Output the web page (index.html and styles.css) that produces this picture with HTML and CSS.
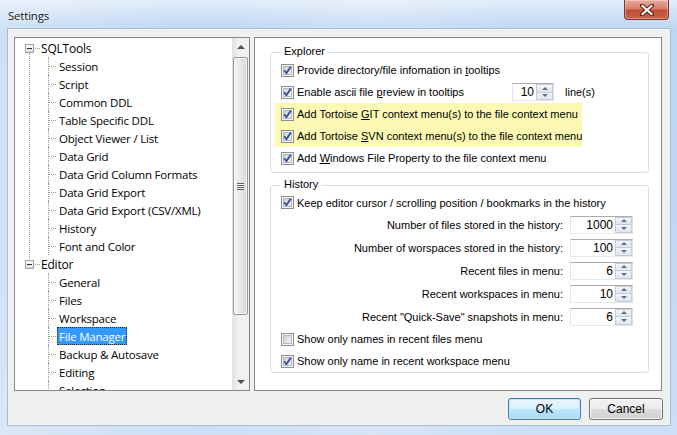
FILE: index.html
```html
<!DOCTYPE html>
<html>
<head>
<meta charset="utf-8">
<link rel="stylesheet" href="styles.css">
</head>
<body>
<svg class="defs" width="0" height="0">
  <defs>
    <linearGradient id="cbg" x1="0" y1="0" x2="1" y2="1">
      <stop offset="0" stop-color="#cbcfd5"/>
      <stop offset="1" stop-color="#f6f6f6"/>
    </linearGradient>
    <symbol id="cb-off" viewBox="0 0 13 13">
      <rect x="0.5" y="0.5" width="12" height="12" fill="#f4f4f4" stroke="#8f8f8f"/>
      <rect x="2.5" y="2.5" width="8" height="8" fill="url(#cbg)" stroke="#b4b9be"/>
    </symbol>
    <symbol id="cb-on" viewBox="0 0 13 13">
      <rect x="0.5" y="0.5" width="12" height="12" fill="#f4f4f4" stroke="#8f8f8f"/>
      <rect x="2.5" y="2.5" width="8" height="8" fill="url(#cbg)" stroke="#b4b9be"/>
      <path d="M3.2 6.3 L5.4 9.2 L9.8 2.6" fill="none" stroke="#3b5596" stroke-width="1.9" stroke-linejoin="round"/>
    </symbol>
  </defs>
</svg>
<div class="window">
  <div class="titlebar">
    <span class="title">Settings</span>
    <div class="close">
      <svg width="14" height="12" viewBox="0 0 14 12">
        <path d="M2 1.5 L12 10.5 M12 1.5 L2 10.5" stroke="#5b1d12" stroke-width="4" stroke-linecap="square"/>
        <path d="M2.5 2 L11.5 10 M11.5 2 L2.5 10" stroke="#ffffff" stroke-width="2.2" stroke-linecap="square"/>
      </svg>
    </div>
  </div>
  <div class="client">
    <div class="panes">
      <div class="tree">
        <div class="tree-content">
          <ul class="roots">
            <li class="rnode">
              <div class="rrow"><span class="exp"></span><span class="hdot"></span><span class="rlbl">SQLTools</span></div>
              <ul class="kids">
                <li><span class="lbl">Session</span></li>
                <li><span class="lbl">Script</span></li>
                <li><span class="lbl">Common DDL</span></li>
                <li><span class="lbl">Table Specific DDL</span></li>
                <li><span class="lbl">Object Viewer / List</span></li>
                <li><span class="lbl">Data Grid</span></li>
                <li><span class="lbl">Data Grid Column Formats</span></li>
                <li><span class="lbl">Data Grid Export</span></li>
                <li><span class="lbl">Data Grid Export (CSV/XML)</span></li>
                <li><span class="lbl">History</span></li>
                <li><span class="lbl">Font and Color</span></li>
              </ul>
            </li>
            <li class="rnode">
              <div class="rrow"><span class="exp"></span><span class="hdot"></span><span class="rlbl">Editor</span></div>
              <ul class="kids">
                <li><span class="lbl">General</span></li>
                <li><span class="lbl">Files</span></li>
                <li><span class="lbl">Workspace</span></li>
                <li><span class="lbl selected">File Manager</span></li>
                <li><span class="lbl">Backup &amp; Autosave</span></li>
                <li><span class="lbl">Editing</span></li>
                <li><span class="lbl">Selection</span></li>
              </ul>
            </li>
          </ul>
        </div>
        <div class="vscroll">
          <div class="sbtn"><span class="tri-up"></span></div>
          <div class="track">
            <div class="thumb"><span class="grip"></span></div>
          </div>
          <div class="sbtn"><span class="tri-down"></span></div>
        </div>
      </div>
      <div class="page">
        <fieldset class="group explorer">
          <legend>Explorer</legend>
          <div class="cbrow"><svg class="cb"><use href="#cb-on"/></svg><span>Provide directory/file infomation in <u>t</u>ooltips</span></div>
          <div class="cbrow"><svg class="cb"><use href="#cb-on"/></svg><span class="fixlbl">Enable ascii file <u>p</u>review in tooltips</span>
            <div class="spin small"><span class="val">10</span><span class="arrows"><span class="ab"><i class="up"></i></span><span class="ab"><i class="dn"></i></span></span></div>
            <span class="unit">line(s)</span>
          </div>
          <div class="hl">
            <div class="cbrow"><svg class="cb"><use href="#cb-on"/></svg><span>Add Tortoise <u>G</u>IT context menu(s) to the file context menu</span></div>
            <div class="cbrow"><svg class="cb"><use href="#cb-on"/></svg><span>Add Tortoise <u>S</u>VN context menu(s) to the file context menu</span></div>
          </div>
          <div class="cbrow"><svg class="cb"><use href="#cb-on"/></svg><span>Add <u>W</u>indows File Property to the file context menu</span></div>
        </fieldset>
        <fieldset class="group history">
          <legend>History</legend>
          <div class="cbrow first"><svg class="cb"><use href="#cb-on"/></svg><span>Keep editor cursor / scrolling position / bookmarks in the history</span></div>
          <div class="numrow"><span>Number of files stored in the history:</span>
            <div class="spin"><span class="val">1000</span><span class="arrows"><span class="ab"><i class="up"></i></span><span class="ab"><i class="dn"></i></span></span></div></div>
          <div class="numrow"><span>Number of worspaces stored in the history:</span>
            <div class="spin"><span class="val">100</span><span class="arrows"><span class="ab"><i class="up"></i></span><span class="ab"><i class="dn"></i></span></span></div></div>
          <div class="numrow"><span>Recent files in menu:</span>
            <div class="spin"><span class="val">6</span><span class="arrows"><span class="ab"><i class="up"></i></span><span class="ab"><i class="dn"></i></span></span></div></div>
          <div class="numrow"><span>Recent workspaces in menu:</span>
            <div class="spin"><span class="val">10</span><span class="arrows"><span class="ab"><i class="up"></i></span><span class="ab"><i class="dn"></i></span></span></div></div>
          <div class="numrow"><span>Recent "Quick-Save" snapshots in menu:</span>
            <div class="spin"><span class="val">6</span><span class="arrows"><span class="ab"><i class="up"></i></span><span class="ab"><i class="dn"></i></span></span></div></div>
          <div class="cbrow"><svg class="cb"><use href="#cb-off"/></svg><span>Show only names in recent files menu</span></div>
          <div class="cbrow"><svg class="cb"><use href="#cb-on"/></svg><span>Show only name in recent workspace menu</span></div>
        </fieldset>
      </div>
    </div>
    <div class="buttons">
      <button class="btn ok">OK</button>
      <button class="btn">Cancel</button>
    </div>
  </div>
</div>
</body>
</html>
```

FILE: styles.css
```css
* { box-sizing: border-box; }
html, body { margin: 0; padding: 0; }
body { width: 677px; height: 435px; overflow: hidden; background: #c9dcf3; }
.defs { position: absolute; width: 0; height: 0; }

.window {
  width: 677px; height: 435px;
  display: flex; flex-direction: column;
  padding: 0 7px 10px 8px;
  background:
    linear-gradient(90deg, rgba(255,255,255,0.25), rgba(255,255,255,0) 30%, rgba(255,255,255,0.2) 55%, rgba(255,255,255,0) 80%),
    linear-gradient(180deg, #e4eefa 0px, #cfe1f6 14px, #bed6f2 29px, #c3d8f1 60%, #cddff4 100%);
}

.titlebar {
  height: 29px; flex: none;
  display: flex; justify-content: space-between; align-items: flex-start;
}
.title {
  font-family: "Open Sans", "Noto Sans", sans-serif;
  font-size: 11.5px; letter-spacing: -0.2px; color: #1b1b1b;
  margin-top: 8px; margin-left: 0px;
  text-shadow: 0 0 6px rgba(255,255,255,0.9);
}
.close {
  width: 45px; height: 20px; margin-right: 1px;
  border: 1px solid #76352a; border-top: none;
  border-radius: 0 0 4px 4px;
  background: linear-gradient(180deg, #e9aa9d 0%, #d87f6d 45%, #c24e36 55%, #c8634b 100%);
  box-shadow: inset 0 0 0 1px rgba(255,255,255,0.35);
  display: flex; align-items: center; justify-content: center;
}

.client {
  flex: 1;
  background: #f0f0f0;
  outline: 1px solid #aabdd4;
  padding: 8px 7px 5px 6px;
  display: flex; flex-direction: column;
}
.panes { display: flex; gap: 4px; height: 354px; margin-right: 1px; }

/* tree */
.tree {
  width: 236px; height: 354px;
  border: 1px solid #828790;
  background: #fff;
  display: flex;
}
.tree-content {
  flex: 1; overflow: hidden;
  padding-left: 10px; padding-top: 1px;
  font-family: "Open Sans", "Noto Sans", sans-serif;
  font-size: 11.5px; letter-spacing: -0.2px; color: #000;
}
.roots, .kids { list-style: none; margin: 0; padding: 0; }
.rnode { position: relative; }
.rnode:first-child::before {
  content: ""; position: absolute;
  left: 4px; top: 14px; height: 208px;
  border-left: 1px dotted #9a9a9a;
}
.rrow { height: 18px; display: flex; align-items: center; }
.exp {
  width: 9px; height: 9px; flex: none; position: relative;
  border: 1px solid #a0a0a0;
  background: linear-gradient(180deg, #ffffff, #dedede);
}
.exp::after {
  content: ""; position: absolute; left: 1px; top: 3px; width: 5px; height: 1px; background: #1c2b50;
}
.hdot { width: 5px; height: 0; border-top: 1px dotted #9a9a9a; margin-left: 1px; }
.rlbl { padding-left: 1px; height: 18px; line-height: 19px; white-space: nowrap; font-size: 12px; }
.kids { margin-left: 23px; }
.kids li {
  position: relative; height: 18px; line-height: 19px;
  padding-left: 9px; white-space: nowrap;
}
.kids li::before {
  content: ""; position: absolute; left: 0; top: 0; bottom: 0;
  border-left: 1px dotted #9a9a9a;
}
.kids li::after {
  content: ""; position: absolute; left: 1px; top: 9px; width: 7px;
  border-top: 1px dotted #9a9a9a;
}
.lbl { display: inline-block; padding: 0 2px; height: 18px; }
.lbl.selected {
  background: #3399ff; color: #fff;
  outline: 1px dotted #3b2a10; outline-offset: -1px;
}

.vscroll {
  width: 17px; flex: none;
  display: flex; flex-direction: column;
  background: linear-gradient(90deg, #e2e2e2, #f1f1f1 40%, #f1f1f1);
}
.sbtn {
  height: 17px; flex: none;
  display: flex; align-items: center; justify-content: center;
}
.tri-up { width: 0; height: 0; border-left: 4px solid transparent; border-right: 4px solid transparent; border-bottom: 4px solid #505050; }
.tri-down { width: 0; height: 0; border-left: 4px solid transparent; border-right: 4px solid transparent; border-top: 4px solid #505050; }
.track { flex: 1; padding: 2px 1px 0 1px; }
.thumb {
  height: 258px;
  border: 1px solid #979797; border-radius: 2px;
  background: linear-gradient(90deg, #f3f3f3, #e8e8e8 50%, #d6d6d6);
  box-shadow: inset 0 0 0 1px rgba(255,255,255,0.7);
  display: flex; align-items: center; justify-content: center;
}
.grip {
  width: 7px; height: 7px;
  background: repeating-linear-gradient(180deg, #5f5f5f 0 1px, #f4f4f4 1px 2px);
}

/* page */
.page {
  width: 408px; height: 354px;
  border: 1px solid #828790;
  background: #fff;
  font-family: "Liberation Sans", Arial, sans-serif;
  font-size: 11px; color: #000;
  padding-top: 7px;
}
.group {
  border: 1px solid #d5dfe5; border-radius: 3px;
  margin: 0 12px 0 15px;
  padding: 0 15px 0 10px;
  min-width: 0;
}
.group legend { padding: 0 3px; line-height: 12px; height: 14px; }
.explorer { padding-bottom: 3px; }
.history { margin-top: 5px; padding-bottom: 0; }

.cbrow { display: flex; align-items: center; height: 22px; gap: 3px; white-space: nowrap; }
.cbrow.first { height: 21px; }
.cb { width: 13px; height: 13px; flex: none; }
.fixlbl { width: 212px; }
.unit { margin-left: 8px; }
.hl {
  background: #fbf9b4;
  margin-left: -6px; padding-left: 6px;
  width: 307px;
}

.numrow {
  height: 23px;
  display: flex; align-items: center; justify-content: flex-end; gap: 7px;
  white-space: nowrap;
}
.spin {
  width: 63px; height: 18px; flex: none;
  display: flex;
  border: 1px solid;
  border-color: #abadb3 #dbdfe6 #e3e9ef #e2e3ea;
  background: #fff;
}
.spin.small { width: 42px; }
.spin .val { flex: 1; text-align: right; padding-right: 2px; line-height: 16px; font-size: 12px; }
.arrows { width: 17px; display: flex; flex-direction: column; gap: 0; }
.ab {
  flex: 1; display: flex; align-items: center; justify-content: center;
  border: 1px solid #c6ccd4;
  background: linear-gradient(180deg, #f4f6f9, #dfe6ee);
}
.ab + .ab { border-top: none; }
.ab .up { width: 0; height: 0; border-left: 3px solid transparent; border-right: 3px solid transparent; border-bottom: 3px solid #5a6f92; }
.ab .dn { width: 0; height: 0; border-left: 3px solid transparent; border-right: 3px solid transparent; border-top: 3px solid #5a6f92; }

/* buttons */
.buttons { display: flex; justify-content: flex-end; gap: 8px; margin-top: 7px; }
.btn {
  width: 73px; height: 22px; padding: 0;
  font-family: "Liberation Sans", Arial, sans-serif; font-size: 12px; color: #000;
  border: 1px solid #707070; border-radius: 3px;
  background: linear-gradient(180deg, #f2f2f2 0%, #ebebeb 48%, #dddddd 52%, #cfcfcf 100%);
  box-shadow: inset 0 0 0 1px rgba(255,255,255,0.8);
}
.btn + .btn { width: 74px; }
.btn.ok {
  border-color: #3c7fb1;
  background: linear-gradient(180deg, #eaf6fd 0%, #d9f0fc 48%, #bee6fd 52%, #a7d9f5 100%);
  box-shadow: inset 0 0 0 1px #c4e5f6;
}
```
